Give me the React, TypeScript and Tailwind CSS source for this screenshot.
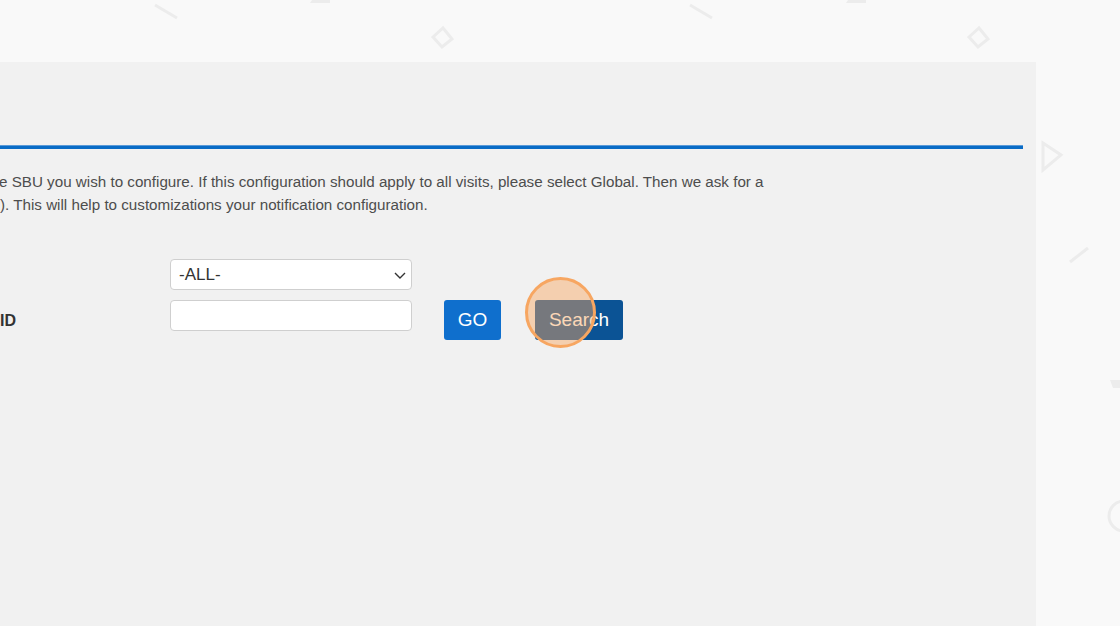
import React from "react";

const font = { fontFamily: '"Liberation Sans", Arial, sans-serif' };

function Decorations() {
  return (
    <svg className="pointer-events-none absolute inset-0" width="1120" height="626" viewBox="0 0 1120 626">
      <g stroke="#ececec" strokeWidth="3" fill="none">
        <line x1="155" y1="5" x2="177" y2="18" />
        <line x1="690" y1="5" x2="712" y2="18" />
        <path d="M433 37 L443 28 L452 39 L442 47 Z" />
        <path d="M969 37 L979 28 L988 39 L978 47 Z" />
        <path d="M1043 143 L1061 155 L1043 170 Z" />
        <line x1="1070" y1="262" x2="1088" y2="248" />
        <circle cx="1124" cy="516" r="15" />
      </g>
      <g fill="#ececec">
        <path d="M312 0 H330 V3 H310 Z" />
        <path d="M848 0 H866 V3 H846 Z" />
        <path d="M1110 380 H1120 V388 H1113 Z" />
      </g>
    </svg>
  );
}

export default function App() {
  return (
    <div className="relative flex h-[626px] w-full flex-col overflow-hidden bg-[#f9f9f9]" style={font}>
      <Decorations />
      <div className="h-[62px] shrink-0" />
      <div className="relative flex w-[1036px] flex-1 flex-col bg-[#f1f1f1]">
        <div className="h-[83px]" />
        <div className="h-[4px] w-[1023px] border-t border-[#5a9ad8] bg-[#0a6cc6]" />

        <div className="mt-[21px] text-[15.2px] leading-[23px] text-[#4d4d4d]">
          <p className="-ml-[1px] whitespace-nowrap">
            e SBU you wish to configure. If this configuration should apply to all visits, please select Global. Then we ask for a
          </p>
          <p className="whitespace-nowrap">). This will help to customizations your notification configuration.</p>
        </div>

        <div className="mt-[43px] flex flex-col gap-[10px]">
          <div className="flex items-center">
            <div className="w-[170px]" />
            <div className="flex h-[31px] w-[242px] items-center justify-between rounded-[4px] border border-[#cfcfcf] bg-white pl-[8px] pr-[4px] text-[17px] text-[#333]">
              <span>-ALL-</span>
              <svg width="14" height="14" viewBox="0 0 14 14" fill="none" stroke="#333" strokeWidth="1.4">
                <path d="M2 5 L7 10 L12 5" />
              </svg>
            </div>
          </div>

          <div className="flex items-start">
            <div className="flex h-[42px] w-[170px] items-center">
              <span className="text-[16px] font-bold text-[#333]">ID</span>
            </div>
            <div className="h-[31px] w-[242px] rounded-[4px] border border-[#cfcfcf] bg-white" />
            <button className="ml-[32px] flex h-[40px] w-[57px] items-center justify-center rounded-[3px] bg-[#0f6fcd] text-[19px] text-white">
              GO
            </button>
            <div className="relative ml-[34px]">
              <button className="flex h-[40px] w-[88px] items-center justify-center rounded-[3px] bg-[#0b5395] text-[19px] text-white">
                Search
              </button>
              <div className="absolute left-[-10px] top-[-23px] h-[71px] w-[71px] rounded-full border-[3px] border-[#f7a661] bg-[#f9a65f]/45" />
            </div>
          </div>
        </div>
      </div>
    </div>
  );
}
